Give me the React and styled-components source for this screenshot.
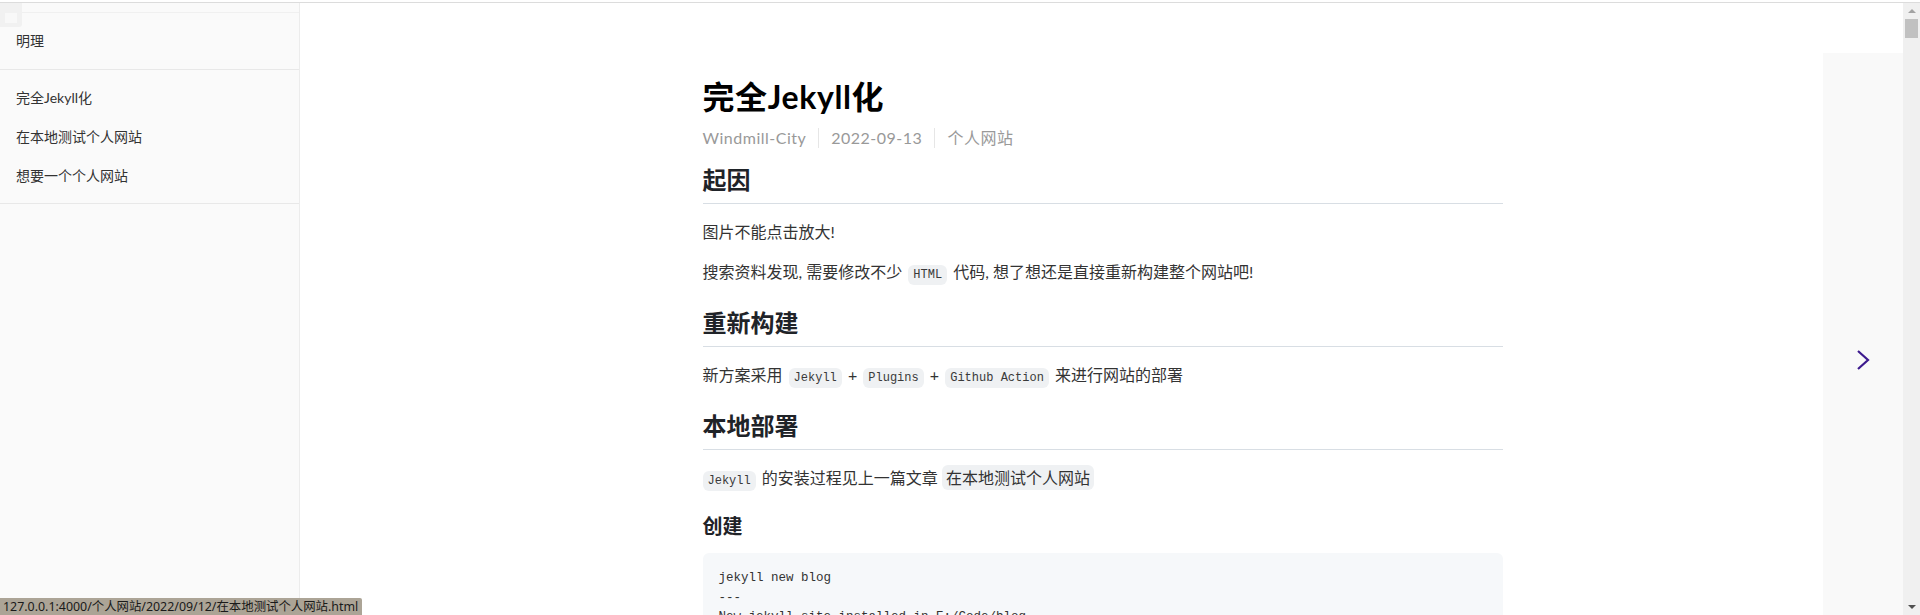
import React from "react";
import styled, { createGlobalStyle } from "styled-components";

const cjk = `"Lato", "Noto Sans CJK SC", sans-serif`;
const mono = `"Liberation Mono", "DejaVu Sans Mono", "Noto Sans CJK SC", monospace`;

const GlobalStyle = createGlobalStyle`
  html, body {
    margin: 0;
    padding: 0;
    height: 100%;
    overflow: hidden;
    background: #fff;
  }
  body {
    font-family: ${cjk};
    color: #24292f;
  }
  * { box-sizing: border-box; }
`;

const Frame = styled.div`
  height: 100vh;
  padding-top: 2px;
  position: relative;
`;

const Shell = styled.div`
  height: 100%;
  border-top: 1px solid #dcdcdc;
  display: flex;
`;

const Sidebar = styled.aside`
  width: 300px;
  flex: none;
  background: #fafafa;
  border-right: 1px solid #ececec;
  padding-top: 9px;
  position: relative;
`;

const Toggle = styled.div`
  position: absolute;
  left: 0;
  top: 0;
  width: 22px;
  height: 24px;
  background: #f1f1f1;
  border-radius: 0 0 3px 0;
  &::after {
    content: "";
    position: absolute;
    left: 5px;
    top: 10px;
    width: 12px;
    height: 10px;
    background: #f8f8f8;
  }
`;

const Section = styled.div`
  border-top: 1px solid ${p => (p.$top ? "#f0f0f0" : "#e8e8e8")};
  padding: ${p => (p.$pad ? "8px 0" : "0")};
  ${p => p.$last && "border-bottom: 1px solid #e8e8e8;"}
`;

const Brand = styled.div`
  height: 56px;
  display: flex;
  align-items: center;
  padding: 0 16px 2px;
  font-size: 14px;
  color: #333;
`;

const NavItem = styled.a`
  display: block;
  padding: 10px 16px;
  line-height: 19px;
  font-size: 14px;
  color: #333;
  text-decoration: none;
`;

const Main = styled.main`
  flex: 1;
  position: relative;
  display: flex;
  justify-content: center;
  padding-top: 74px;
`;

const Article = styled.article`
  width: 800px;
  margin-left: 2px;
  font-size: 16px;
  line-height: 1.5;
  color: #24292f;
`;

const Title = styled.h1`
  margin: 0 0 11px;
  font-size: 32px;
  line-height: 40px;
  font-weight: 700;
  letter-spacing: 0.6px;
  color: #000;
`;

const Meta = styled.div`
  display: flex;
  align-items: center;
  color: #999;
  font-size: 16px;
  line-height: 24px;
  letter-spacing: 0.5px;
  margin-bottom: 17px;
`;

const MetaItem = styled.span`
  padding: 0 12px;
  border-left: 1px solid #e6e6e6;
  line-height: 20px;
  &:first-child {
    padding-left: 0;
    border-left: none;
  }
`;

const H2 = styled.h2`
  margin: ${p => (p.$first ? "0" : "24px")} 0 16px;
  font-size: 24px;
  line-height: 30px;
  font-weight: 700;
  padding-bottom: 8px;
  border-bottom: 1px solid #d8dee4;
  color: #1f2328;
`;

const H3 = styled.h3`
  margin: 24px 0 14px;
  font-size: 20px;
  line-height: 25px;
  font-weight: 700;
  color: #1f2328;
`;

const P = styled.p`
  margin: 0 0 16px;
  color: #333;
`;

const Code = styled.code`
  font-family: ${mono};
  font-size: 12px;
  padding: 3px 5px;
  margin: 0 2px;
  background: #eff1f3;
  border-radius: 6px;
  color: #3a3a3a;
`;

const LinkCode = styled.a`
  padding: 3px 4px;
  background: #eff1f3;
  border-radius: 6px;
  color: #333;
  text-decoration: none;
  font-size: 16px;
`;

const Pre = styled.pre`
  margin: 0;
  padding: 16px;
  background: #f6f8fa;
  border-radius: 6px;
  font-family: ${mono};
  font-size: 12.5px;
  line-height: 19.5px;
  color: #333;
`;

const NextPanel = styled.a`
  position: absolute;
  right: 0;
  top: 50px;
  bottom: 0;
  width: 80px;
  background: #f9f9f9;
  display: flex;
  align-items: center;
  justify-content: center;
  padding-top: 52px;
`;

const Scrollbar = styled.div`
  width: 17px;
  flex: none;
  background: #f0f0f0;
  display: flex;
  flex-direction: column;
  align-items: center;
  padding-top: 6px;
`;

const Arrow = styled.div`
  width: 0;
  height: 0;
  border-left: 4px solid transparent;
  border-right: 4px solid transparent;
  ${p =>
    p.$down
      ? "border-top: 4px solid #505050; margin-top: auto; margin-bottom: 6px;"
      : "border-bottom: 4px solid #a3a3a3;"}
`;

const Thumb = styled.div`
  width: 13px;
  height: 19px;
  margin-top: 6px;
  background: #c1c1c1;
`;

const StatusBar = styled.div`
  position: absolute;
  left: 0;
  bottom: 0;
  height: 17px;
  padding: 0 4px 0 3px;
  background: #aca496;
  border-top-right-radius: 2px;
  font-family: "Noto Sans", "Noto Sans CJK SC", sans-serif;
  font-size: 12.4px;
  line-height: 17px;
  color: #1a1a1a;
`;

const Chevron = () => (
  <svg width="16" height="24" viewBox="0 0 16 24" fill="none">
    <path d="M3 3 L13 12 L3 21" stroke="#3d1a8e" strokeWidth="2.2" strokeLinejoin="miter" />
  </svg>
);

const posts = ["完全Jekyll化", "在本地测试个人网站", "想要一个个人网站"];

export default function App() {
  return (
    <Frame>
      <GlobalStyle />
      <Shell>
        <Sidebar>
          <Toggle />
          <Section $top>
            <Brand>明理</Brand>
          </Section>
          <Section $pad $last>
            {posts.map(t => (
              <NavItem key={t} href="#">
                {t}
              </NavItem>
            ))}
          </Section>
        </Sidebar>
        <Main>
          <Article>
            <Title>完全Jekyll化</Title>
            <Meta>
              <MetaItem>Windmill-City</MetaItem>
              <MetaItem>2022-09-13</MetaItem>
              <MetaItem>个人网站</MetaItem>
            </Meta>
            <H2 $first>起因</H2>
            <P>图片不能点击放大!</P>
            <P>
              搜索资料发现, 需要修改不少 <Code>HTML</Code> 代码, 想了想还是直接重新构建整个网站吧!
            </P>
            <H2>重新构建</H2>
            <P>
              新方案采用 <Code>Jekyll</Code> + <Code>Plugins</Code> + <Code>Github Action</Code> 来进行网站的部署
            </P>
            <H2>本地部署</H2>
            <P>
              <Code style={{ marginLeft: 0 }}>Jekyll</Code> 的安装过程见上一篇文章 <LinkCode href="#">在本地测试个人网站</LinkCode>
            </P>
            <H3>创建</H3>
            <Pre>{`jekyll new blog
---
New jekyll site installed in E:/Code/blog.
Running bundle install in E:/Code/blog...`}</Pre>
          </Article>
          <NextPanel href="#">
            <Chevron />
          </NextPanel>
        </Main>
        <Scrollbar>
          <Arrow />
          <Thumb />
          <Arrow $down />
        </Scrollbar>
      </Shell>
      <StatusBar>127.0.0.1:4000/个人网站/2022/09/12/在本地测试个人网站.html</StatusBar>
    </Frame>
  );
}
